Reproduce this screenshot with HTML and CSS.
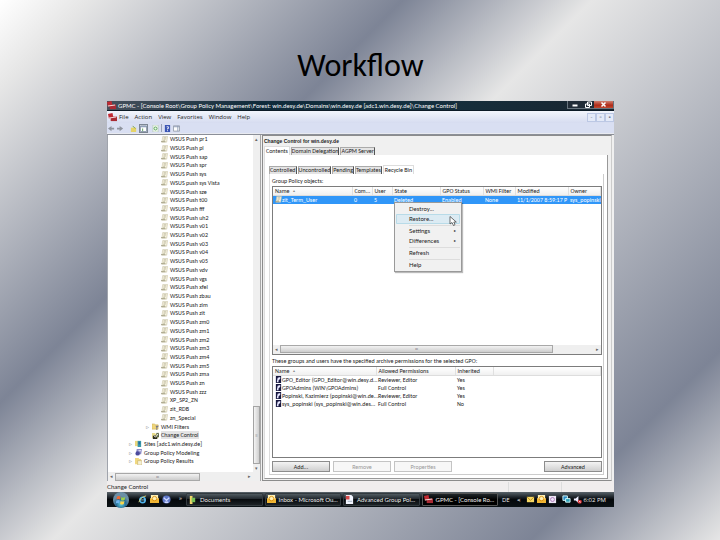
FILE: index.html
```html
<!DOCTYPE html>
<html lang="en">
<head>
<meta charset="utf-8">
<title>Workflow</title>
<link rel="stylesheet" href="styles.css">
</head>
<body>
<svg class="defs" aria-hidden="true">
  <symbol id="gpo" viewBox="0 0 8 8"><path d="M2 .5h5.500L6.500 7H1z" fill="#f6f3e0" stroke="#c5bea2" stroke-width=".6"/><path d="M3 2h3M3 3.500h2.500M2.500 5h2" stroke="#aaa588" stroke-width=".7"/><path d="M0 6.500h5" stroke="#9c977c"/></symbol>
  <symbol id="folder" viewBox="0 0 8 8"><path d="M0 1h3l1 1h3v5H0z" fill="#f0d67c" stroke="#c9a94c" stroke-width=".5"/><path d="M4 3h4L6 5.500V8H5V5.500z" fill="#778"/></symbol>
  <symbol id="change" viewBox="0 0 8 8"><path d="M0 1h3l1 1h3v5H0z" fill="#e8dc8c"/><path d="M1 4h5v4H1z" fill="#2c2c1c"/><path d="M5 1h3v5H5z" fill="#5c6848"/><path d="M2 4l2 2 3-4" stroke="#fff" fill="none"/></symbol>
  <symbol id="sites" viewBox="0 0 8 8"><path d="M0 1h4v6H0z" fill="#ecd67e"/><path d="M3 1h4v7H3z" fill="#3b9aa8"/><path d="M4 2h2v3H4z" fill="#2468a8"/></symbol>
  <symbol id="model" viewBox="0 0 8 8"><path d="M2 0h6L7 6H1z" fill="#8c8cc8"/><circle cx="3" cy="5" r="2.500" fill="#4a4a9c"/><path d="M4 2h3" stroke="#fff"/></symbol>
  <symbol id="results" viewBox="0 0 8 8"><path d="M0 0h4l1 1h2v6H0z" fill="#f1d980"/><path d="M3 3h5v5H3z" fill="#f5efd5" stroke="#c2aa60" stroke-width=".6"/></symbol>
  <symbol id="toolbox" viewBox="0 0 10 10"><path d="M0 1l5-1 1 5-5 1z" fill="#c22a32"/><path d="M3 4h7v5H3z" fill="#a92b34"/><path d="M1 5.500l8-1" stroke="#f6d8d8" stroke-width="1.200"/></symbol>
  <symbol id="mail" viewBox="0 0 10 10"><path d="M1 0h8v7H1z" fill="#fff0b4"/><path d="M0 3l5 3 5-3v6H0z" fill="#f0b634"/><circle cx="5" cy="4" r="2.500" fill="none" stroke="#d99114"/></symbol>
  <symbol id="user" viewBox="0 0 8 8"><path d="M1 0h6v8H1z" fill="#17173f"/><path d="M3 2l3-1v2L4 5v2H2z" fill="#e8e8ff"/></symbol>
</svg>
<h1>Workflow</h1>
<main class="desktop">
  <header class="titlebar">
    <svg class="ico"><use href="#toolbox"/></svg>
    <span class="caption">GPMC - [Console Root\Group Policy Management\Forest: win.desy.de\Domains\win.desy.de [adc1.win.desy.de]\Change Control]</span>
    <div class="winbtns">
      <button aria-label="Minimize"><svg viewBox="0 0 12 7"><path d="M4 4.500h5" stroke="#fff" stroke-width="2"/></svg></button>
      <button aria-label="Restore"><svg viewBox="0 0 12 7"><path d="M6 1h4v3.500H6zM4 3h4v3.500H4z" fill="#222d38" stroke="#fff"/></svg></button>
      <button class="close" aria-label="Close"><svg viewBox="0 0 16 7"><path d="M6 1.500l4 4M10 1.500l-4 4" stroke="#fff" stroke-width="1.500"/></svg></button>
    </div>
  </header>
  <nav class="menubar">
    <svg class="ico"><use href="#toolbox"/></svg>
    <button>File</button><button>Action</button><button>View</button><button>Favorites</button><button>Window</button><button>Help</button>
    <div class="mdi"><button aria-label="Minimize child">-</button><button aria-label="Restore child">▫</button><button aria-label="Close child">▪</button></div>
  </nav>
  <div class="toolbar">
    <button aria-label="Back"><svg viewBox="0 0 8 8"><path d="M0 4l4-3v2h3v2H4v2z" fill="#8f949e"/></svg></button>
    <button aria-label="Forward"><svg viewBox="0 0 8 8"><path d="M7 4L3 1v2H0v2h3v2z" fill="#8f949e"/></svg></button>
    <i></i>
    <button aria-label="Up"><svg viewBox="0 0 8 8"><path d="M1 3h6v5H1z" fill="#e6d468"/><path d="M3 1l3 3" stroke="#6c9c40"/></svg></button>
    <button class="on" aria-label="Show tree"><svg viewBox="0 0 8 8"><path d="M.5 1h7v6.500h-7z" fill="#fff" stroke="#8290a4"/><path d="M1 2h6" stroke="#6d83a8"/><path d="M3 4v3" stroke="#4c9a50"/></svg></button>
    <button aria-label="Refresh"><svg viewBox="0 0 8 8"><path d="M1 0h6v8H1z" fill="#eef7ec" stroke="#a9bfae" stroke-width=".6"/><circle cx="4" cy="4" r="1.700" fill="none" stroke="#4e9f50"/></svg></button>
    <b></b>
    <button aria-label="Help topics"><svg viewBox="0 0 8 8"><path d="M1 0h6v8H1z" fill="#3c56b4"/><path d="M3 2h2v2H4v1M4 6v1" fill="none" stroke="#fff"/></svg></button>
    <button aria-label="Action pane"><svg viewBox="0 0 8 8"><path d="M.5 1h7v6h-7z" fill="#fff" stroke="#9199a8"/><path d="M5.500 1v6M1 2h6" stroke="#8c99b4"/></svg></button>
  </div>
  <div class="content">
    <aside class="tree-pane">
      <div class="tree-row">
        <ul class="tree">
          <li><svg><use href="#gpo"/></svg>WSUS Push pr1</li>
          <li><svg><use href="#gpo"/></svg>WSUS Push pl</li>
          <li><svg><use href="#gpo"/></svg>WSUS Push sap</li>
          <li><svg><use href="#gpo"/></svg>WSUS Push spr</li>
          <li><svg><use href="#gpo"/></svg>WSUS Push sys</li>
          <li><svg><use href="#gpo"/></svg>WSUS push sys Vista</li>
          <li><svg><use href="#gpo"/></svg>WSUS Push sze</li>
          <li><svg><use href="#gpo"/></svg>WSUS Push t00</li>
          <li><svg><use href="#gpo"/></svg>WSUS Push fff</li>
          <li><svg><use href="#gpo"/></svg>WSUS Push uh2</li>
          <li><svg><use href="#gpo"/></svg>WSUS Push v01</li>
          <li><svg><use href="#gpo"/></svg>WSUS Push v02</li>
          <li><svg><use href="#gpo"/></svg>WSUS Push v03</li>
          <li><svg><use href="#gpo"/></svg>WSUS Push v04</li>
          <li><svg><use href="#gpo"/></svg>WSUS Push v05</li>
          <li><svg><use href="#gpo"/></svg>WSUS Push vdv</li>
          <li><svg><use href="#gpo"/></svg>WSUS Push vgs</li>
          <li><svg><use href="#gpo"/></svg>WSUS Push xfel</li>
          <li><svg><use href="#gpo"/></svg>WSUS Push zbau</li>
          <li><svg><use href="#gpo"/></svg>WSUS Push zim</li>
          <li><svg><use href="#gpo"/></svg>WSUS Push zit</li>
          <li><svg><use href="#gpo"/></svg>WSUS Push zm0</li>
          <li><svg><use href="#gpo"/></svg>WSUS Push zm1</li>
          <li><svg><use href="#gpo"/></svg>WSUS Push zm2</li>
          <li><svg><use href="#gpo"/></svg>WSUS Push zm3</li>
          <li><svg><use href="#gpo"/></svg>WSUS Push zm4</li>
          <li><svg><use href="#gpo"/></svg>WSUS Push zm5</li>
          <li><svg><use href="#gpo"/></svg>WSUS Push zma</li>
          <li><svg><use href="#gpo"/></svg>WSUS Push zn</li>
          <li><svg><use href="#gpo"/></svg>WSUS Push zzz</li>
          <li><svg><use href="#gpo"/></svg>XP_SP2_ZN</li>
          <li><svg><use href="#gpo"/></svg>zit_RDB</li>
          <li><svg><use href="#gpo"/></svg>zn_Special</li>
          <li class="lv2"><em>▹</em><svg><use href="#folder"/></svg>WMI Filters</li>
          <li class="lv2"><em></em><svg><use href="#change"/></svg><span class="current">Change Control</span></li>
          <li class="lv1"><em>▹</em><svg><use href="#sites"/></svg>Sites [adc1.win.desy.de]</li>
          <li class="lv1"><em>▹</em><svg><use href="#model"/></svg>Group Policy Modeling</li>
          <li class="lv1"><em>▹</em><svg><use href="#results"/></svg>Group Policy Results</li>
        </ul>
        <div class="vscroll"><span>▴</span><div class="track"><div class="thumb">≡</div></div><span>▾</span></div>
      </div>
      <div class="hscroll tree-h"><span>◂</span><div class="track"><div class="thumb">ııı</div></div><span>▸</span></div>
    </aside>
    <section class="detail">
      <h2>Change Control for win.desy.de</h2>
      <div class="tabs outer-tabs"><button class="sel">Contents</button><button>Domain Delegation</button><button>AGPM Server</button></div>
      <div class="page outer">
        <div class="tabs"><button>Controlled</button><button>Uncontrolled</button><button>Pending</button><button>Templates</button><button class="sel">Recycle Bin</button></div>
        <div class="page inner">
          <p>Group Policy objects:</p>
          <div class="list objects">
            <table>
              <colgroup><col class="c-name"><col class="c-com"><col class="c-user"><col class="c-state"><col class="c-gpo"><col class="c-wmi"><col class="c-mod"><col></colgroup>
              <thead><tr><th>Name <small>▴</small></th><th>Com...</th><th>User</th><th>State</th><th>GPO Status</th><th>WMI Filter</th><th>Modified</th><th>Owner</th></tr></thead>
              <tbody><tr class="picked"><td><svg><use href="#gpo"/></svg>zit_Term_User</td><td>0</td><td>5</td><td>Deleted</td><td>Enabled</td><td>None</td><td>11/1/2007 8:59:17 P</td><td>sys_popinski</td></tr></tbody>
            </table>
            <div class="hscroll list-h"><span>◂</span><div class="track"><div class="thumb">ııı</div></div><span>▸</span></div>
            <div class="context" role="menu">
              <button>Destroy...</button>
              <button class="hover">Restore...</button>
              <hr>
              <button>Settings<span>▸</span></button>
              <button>Differences<span>▸</span></button>
              <hr>
              <button>Refresh</button>
              <hr>
              <button>Help</button>
              <svg class="cursor" viewBox="0 0 8 10"><path d="M1 .5v7.500l2-1.500L4.500 9.500l1.500-.8L4.800 6H7.300z" fill="#fff" stroke="#333" stroke-width=".7"/></svg>
            </div>
          </div>
          <p class="perms-label">These groups and users have the specified archive permissions for the selected GPO:</p>
          <div class="list perms">
            <table>
              <colgroup><col class="p-name"><col class="p-perm"><col class="p-inh"><col></colgroup>
              <thead><tr><th>Name <small>▴</small></th><th>Allowed Permissions</th><th>Inherited</th><th></th></tr></thead>
              <tbody>
                <tr><td><svg><use href="#user"/></svg>GPO_Editor (GPO_Editor@win.desy.d...</td><td>Reviewer, Editor</td><td>Yes</td><td></td></tr>
                <tr><td><svg><use href="#user"/></svg>GPOAdmins (WIN\GPOAdmins)</td><td>Full Control</td><td>Yes</td><td></td></tr>
                <tr><td><svg><use href="#user"/></svg>Popinski, Kazimierz (popinski@win.de...</td><td>Reviewer, Editor</td><td>Yes</td><td></td></tr>
                <tr><td><svg><use href="#user"/></svg>sys_popinski (sys_popinski@win.des...</td><td>Full Control</td><td>No</td><td></td></tr>
              </tbody>
            </table>
          </div>
          <div class="actions"><button>Add...</button><button disabled>Remove</button><button disabled>Properties</button><button class="adv">Advanced</button></div>
        </div>
      </div>
    </section>
  </div>
  <div class="status"><span>Change Control</span><i></i><i></i></div>
  <footer class="taskbar">
    <button class="start" aria-label="Start"><svg viewBox="0 0 16 16"><defs><radialGradient id="orb" cy=".75"><stop offset="0" stop-color="#5fd0dc"/><stop offset=".6" stop-color="#256a94"/><stop offset="1" stop-color="#6b8fa6"/></radialGradient></defs><circle cx="8" cy="8" r="8" fill="url(#orb)"/><path d="M4 4.500q2-1 3.500 0L7 7.500q-2-1-3.500 0z" fill="#ee6a35"/><path d="M8.300 5q2 1 3.900 0l-.6 3q-2 1-3.600 0z" fill="#9fcf4a"/><path d="M3.300 8.500q2-1 3.500 0l-.5 3q-2-1-3.500 0z" fill="#6fb4ee"/><path d="M7.600 9q2 1 3.800 0l-.6 3q-2 1-3.700 0z" fill="#fbd54a"/></svg></button>
    <div class="quick">
      <svg viewBox="0 0 10 10"><circle cx="5" cy="5.500" r="3" fill="none" stroke="#4fb4ee" stroke-width="1.800"/><path d="M3 5.500h5" stroke="#8fd4f8"/><path d="M1 8Q3 2 9 1" fill="none" stroke="#e0d878"/></svg>
      <svg><use href="#mail"/></svg>
      <svg viewBox="0 0 10 10"><circle cx="5" cy="5" r="4.500" fill="#6078c8"/><path d="M2 3l3 3 3-3M3 8h4" fill="none" stroke="#cdd8ff" stroke-width="1.500"/></svg>
      <span>»</span>
    </div>
    <div class="tasks">
      <button><svg viewBox="0 0 10 10"><path d="M2 1h3v9H2z" fill="#f2d56a"/><path d="M4 3h4v5H4z" fill="#79c257"/></svg>Documents</button>
      <button><svg><use href="#mail"/></svg>Inbox - Microsoft Ou...</button>
      <button><svg viewBox="0 0 10 10"><path d="M1 0h6l2 2v8H1z" fill="#f2f5ff"/><path d="M1 1h4v4H1z" fill="#d54a4a"/><path d="M3 7h5" stroke="#9ab"/></svg>Advanced Group Pol...</button>
      <button class="pressed"><svg><use href="#toolbox"/></svg>GPMC - [Console Ro...</button>
    </div>
    <div class="tray">
      <span class="lang">DE</span><span class="chev">&lt;</span>
      <svg viewBox="0 0 10 10"><path d="M1 2h8v6H1z" fill="#f7d964"/><path d="M1 2l4 4 4-4" fill="none" stroke="#b88a20"/></svg>
      <svg><use href="#mail"/></svg>
      <svg viewBox="0 0 10 10"><path d="M1 1h8v8H1z" fill="#ece6f5"/><circle cx="5" cy="5" r="2.200" fill="none" stroke="#ad75b8"/></svg>
      <svg class="net" viewBox="0 0 10 10"><path d="M1 1h5v5H1z" fill="#2b8ac4" stroke="#dff"/><path d="M4 4h5v4H4z" fill="#2aa0b8" stroke="#dff"/></svg>
      <svg viewBox="0 0 10 10"><path d="M1 4h2l3-3v8L3 6H1z" fill="#eef"/><circle cx="7.500" cy="7.500" r="2.300" fill="#d8262c"/><path d="M6.500 6.500l2 2M8.500 6.500l-2 2" stroke="#fff" stroke-width=".7"/></svg>
      <time>6:02 PM</time>
    </div>
  </footer>
</main>
</body>
</html>
```
FILE: styles.css
```css
* { box-sizing: border-box; margin: 0; padding: 0; }
body {
  display: flex; flex-direction: column; height: 100vh; padding: 46px 106px 33px 107px;
  background: linear-gradient(135deg, #fff 0%, #e6e6e6 7%, #7d8496 32%, #e6e6e6 47%, #7d8496 85%, #e6e6e6 100%);
  font: 6px/8px "Open Sans", "Noto Sans", sans-serif; color: #222; overflow: hidden;
}
button { font: inherit; color: inherit; border: 0; background: none; white-space: nowrap; }
svg { display: block; flex: none; }
.defs { position: absolute; width: 0; height: 0; }
h1 { font: 400 32px/40px Carlito, Lato, sans-serif; text-align: center; color: #000; padding-bottom: 15px; height: 55px; flex: none; }
.desktop { flex: 1; min-height: 0; display: flex; flex-direction: column; background: #f0f0f0; }
.ico { width: 9px; height: 9px; }

.titlebar { display: flex; align-items: center; gap: 2px; height: 10px; color: #fff; background: linear-gradient(90deg, #46515c, #0f2a3a 30%, #14303f 60%, #1a2630); border-bottom: 1px solid #0b1a26; font-family: Lato, sans-serif; }
.caption { white-space: nowrap; flex: 1; }
.winbtns { display: flex; height: 8px; align-self: flex-start; background: #222d38; border: 1px solid #68747e; border-top: 0; }
.winbtns svg { width: 13px; height: 7px; }
.winbtns .close { background: linear-gradient(#d08070, #b02a18 60%, #c04a30); }
.winbtns .close svg { width: 19px; }

.menubar { display: flex; align-items: center; height: 12px; background: linear-gradient(#f2f5fc, #d6dcf0); }
.menubar > .ico { margin: 0 1px 0 1px; }
.menubar button { padding: 0 3px 0 1px; margin-right: 2px; }
.mdi { margin-left: auto; display: flex; color: #6a7488; }
.mdi button { width: 9px; margin: 0; padding: 0; height: 9px; border: 1px solid #bcc8e4; line-height: 6px; background: #e4eaf8; }

.toolbar { display: flex; align-items: center; gap: 2px; height: 11px; padding-left: 1px; background: #d9dff2; border-bottom: 1px solid #e8eaf0; }
.toolbar svg { width: 7px; height: 7px; }
.toolbar i { width: 2px; }
.toolbar b { width: 1px; height: 8px; background: #9aa2b4; }
.toolbar .on { border: 1px solid #7c8694; background: #e9edf6; margin-right: 2px; }

.content { flex: 1; min-height: 0; display: flex; gap: 1px; padding-right: 2px; border-top: 1px solid #8b8f98; }
.tree-pane { flex: 0 0 154px; display: flex; flex-direction: column; border-left: 1px solid #a0a4ac; border-right: 1px solid #a8a8a8; background: #fff; font-family: Carlito, Lato, sans-serif; }
.tree-row { flex: 1; min-height: 0; display: flex; }
.tree { flex: 1; list-style: none; display: flex; flex-direction: column; padding-bottom: 6px; }
.tree li { flex: 1; min-height: 0; display: flex; align-items: center; gap: 2px; padding-left: 53px; white-space: nowrap; }
.tree svg { width: 7px; height: 7px; }
.tree em { width: 4px; font-size: 6px; font-style: normal; color: #999; }
.tree .lv2 { padding-left: 38px; }
.tree .lv1 { padding-left: 21px; }
.current { background: #e4e4e4; }

.vscroll { width: 7px; background: #efefef; display: flex; flex-direction: column; text-align: center; color: #666; font-size: 5px; }
.vscroll .track { flex: 1; display: flex; flex-direction: column; justify-content: flex-end; }
.vscroll .thumb { height: 18%; border: 1px solid #a4a4a4; background: linear-gradient(90deg, #f4f4f4, #cfcfcf); display: grid; place-items: center; }
.hscroll { height: 9px; background: #efefef; display: flex; align-items: center; color: #666; font-size: 5px; line-height: 7px; }
.hscroll > span { width: 7px; text-align: center; }
.hscroll .track { flex: 1; }
.hscroll .thumb { border: 1px solid #a8a8a8; background: linear-gradient(#f2f2f2, #cdcdcd); text-align: center; height: 8px; line-height: 6px; font-size: 4px; }
.tree-h { padding-right: 7px; }
.tree-h .thumb { width: 65%; }

.detail { flex: 1; min-width: 0; display: flex; flex-direction: column; padding: 1px 3px 1px 1px; border: 1px solid #8c8c8c; border-right-color: #ccc; font-family: "Liberation Sans Narrow", Carlito, Lato, sans-serif; }
h2 { font: 700 5px/8px "Liberation Sans", sans-serif; color: #222; }
.tabs { display: flex; align-items: flex-end; gap: 1px; }
.tabs button { height: 8px; padding: 0; line-height: 7px; background: #e4e4e4; border: 1px solid #aaa; border-bottom: 0; border-right-color: #555; }
.tabs .sel { height: 9px; padding: 0 1px; background: #fff; border-color: #ddd; }
.outer-tabs { padding-top: 1px; }
.page { flex: 1; min-height: 0; display: flex; flex-direction: column; background: #fff; border-right: 1px solid #999; border-bottom: 1px solid #999; }
.outer { padding: 10px 3px 3px 4px; border-left: 1px solid #ddd; }
.inner { padding: 3px 1px 2px 2px; border-color: #ccc; border-left: 1px solid #ddd; }
p { line-height: 9px; white-space: nowrap; }
.perms-label { padding-top: 2px; }
.list { position: relative; border: 1px solid #7c7c7c; display: flex; flex-direction: column; background: #fff; }
.objects { flex: 170; }
.perms { flex: 92; }
table { width: 100%; table-layout: fixed; border-collapse: collapse; }
th { font-weight: 400; text-align: left; height: 8px; background: linear-gradient(#fff, #f0f0f0); border-right: 1px solid #e0e0e0; border-bottom: 1px solid #ddd; }
th, td { padding: 0 0 0 2px; white-space: nowrap; line-height: 8px; }
th small { font-size: 4px; color: #888; padding-left: 2px; vertical-align: top; }
td svg { width: 7px; height: 7px; display: inline-block; vertical-align: top; }
.picked { background: #3096f8; color: #fff; }
.c-name { width: 79px; } .c-com { width: 20px; } .c-user { width: 20px; } .c-state { width: 48px; }
.c-gpo { width: 43px; } .c-wmi { width: 32px; } .c-mod { width: 53px; }
.p-name { width: 103px; } .p-perm { width: 79px; } .p-inh { width: 38px; }
.perms tbody::before { content: ""; display: table-row; height: 1px; }
.list-h { margin-top: auto; }
.list-h .thumb { width: 87%; }

.context { position: absolute; left: 121px; top: 15px; width: 68px; padding: 1px; background: #f1f1f1; border: 1px solid #999; box-shadow: 1px 1px 1px #0004; font-family: Lato, "Open Sans", sans-serif; }
.context button { display: flex; justify-content: space-between; width: 100%; height: 10px; line-height: 9px; padding: 0 4px 0 13px; }
.context .hover { background: #dcebf3; border-radius: 1px; box-shadow: inset 0 0 0 1px #b8dbe8; }
.context span { font-size: 4px; }
.context hr { border: 0; border-top: 1px solid #ddd; margin: 1px 0 0 13px; }
.cursor { position: absolute; left: 54px; top: 13px; width: 8px; height: 10px; }

.actions { display: flex; gap: 3px; padding-top: 3px; }
.actions button { width: 58px; height: 11px; line-height: 8px; border: 1px solid #8c8c8c; background: linear-gradient(#f4f4f4, #cfcfcf); }
.actions button:disabled { background: #f7f7f7; border-color: #c4c4c4; color: #999; }
.actions .adv { margin-left: auto; }

.status { height: 11px; display: flex; align-items: center; background: #f1eeee; font-family: Lato, sans-serif; }
.status span { flex: 1; }
.status i { width: 53px; height: 10px; border-left: 1px solid #ddd; }
.taskbar { display: flex; align-items: center; height: 15px; color: #f2f2f2; background: linear-gradient(#59636a, #1c2228 35%, #05080b 50%, #0b1216); }
.start { padding: 0 6px 0 6px; }
.start svg { width: 16px; height: 16px; }
.taskbar svg:not(.start svg) { width: 9px; height: 9px; }
.quick { display: flex; gap: 3px; width: 51px; padding-left: 3px; }
.quick span { margin-left: 5px; line-height: 6px; }
.tasks { display: flex; gap: 2px; flex: 1; font-family: Lato, sans-serif; }
.tasks button { flex: 1; min-width: 0; overflow: hidden; display: flex; align-items: center; gap: 3px; height: 13px; padding-left: 1px; background: linear-gradient(#505a60, #22282e 45%, #080b0e 50%, #1c2226); border: 1px solid #343b40; border-radius: 1px; }
.tasks .pressed { background: linear-gradient(#20262a, #000 50%); border-color: #555; }
.tray { display: flex; align-items: center; gap: 2px; width: 116px; padding: 0 8px 0 4px; white-space: nowrap; }
.lang { width: 16px; } .chev { width: 8px; font-weight: 700; }
.net { margin-left: 3px; }
.tray time { margin-left: auto; }
```
